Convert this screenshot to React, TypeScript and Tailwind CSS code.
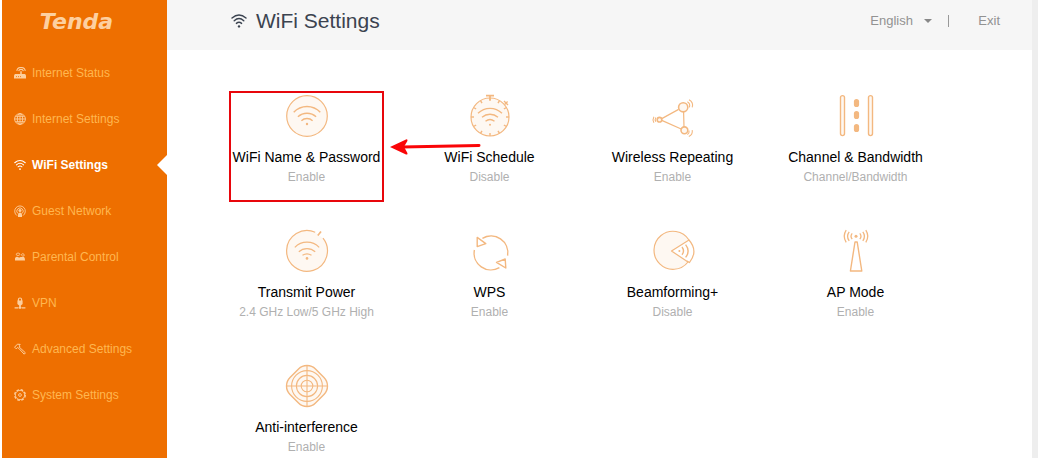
import React from "react";

interface iconProps {
  className?: string;
}

interface menuItem {
  label: string;
  icon: React.FC<iconProps>;
}

interface settingCard {
  title: string;
  status: string;
  icon: React.ReactNode;
  marked?: boolean;
}

const WifiIcon: React.FC<iconProps> = ({ className }) => (
  <svg viewBox="0 0 16 16" fill="none" stroke="currentColor" strokeWidth="1.4" strokeLinecap="round" className={className}>
    <path d="M1 5 Q8 -1.2 15 5" />
    <path d="M3.2 7.8 Q8 3.4 12.8 7.8" />
    <path d="M5.4 10.4 Q8 8.2 10.6 10.4" />
    <circle cx="8" cy="13.4" r="1.2" fill="currentColor" stroke="none" />
  </svg>
);

const RouterIcon: React.FC<iconProps> = ({ className }) => (
  <svg viewBox="0 0 12 12" fill="none" stroke="currentColor" strokeWidth="1.1" className={className}>
    <path d="M2.8 3.8 C3.6 -0.6 10.4 -0.6 11.3 3.8" />
    <path d="M4.7 4.2 C5.2 1.8 8.8 1.8 9.4 4.2" />
    <path d="M7 4.2 V7" strokeWidth="1.5" />
    <path d="M1 7 H11 L12 8.2 V11.4 H0 V8.2 Z" fill="currentColor" stroke="none" />
    <path d="M2 9.6 H3 M4 9.6 H5 M6 9.6 H7" stroke="#ee6f00" strokeWidth="0.8" />
  </svg>
);

const GlobeIcon: React.FC<iconProps> = ({ className }) => (
  <svg viewBox="0 0 12 12" fill="none" stroke="currentColor" strokeWidth="0.9" className={className}>
    <circle cx="6" cy="6" r="5.4" />
    <ellipse cx="6" cy="6" rx="2.7" ry="5.4" />
    <path d="M6 0.6 V11.4 M0.6 6 H11.4 M1.4 3.3 H10.6 M1.4 8.7 H10.6" />
  </svg>
);

const GuestIcon: React.FC<iconProps> = ({ className }) => (
  <svg viewBox="0 0 12 12" fill="none" stroke="currentColor" strokeWidth="0.9" className={className}>
    <path d="M3 10.6 A5.3 5.3 0 1 1 9 10.6" />
    <path d="M3.7 8.4 A3.2 3.2 0 1 1 8.3 8.4" />
    <circle cx="6" cy="5.4" r="1.5" fill="currentColor" stroke="none" />
    <path d="M4 12 V9.4 Q4 7.6 6 7.6 Q8 7.6 8 9.4 V12 Z" fill="currentColor" stroke="none" />
  </svg>
);

const FamilyIcon: React.FC<iconProps> = ({ className }) => (
  <svg viewBox="0 0 12 12" fill="none" stroke="currentColor" strokeWidth="0.8" className={className}>
    <path d="M2.2 4 Q2.2 2 4 2 Q6 2 6 4 M7.4 4.6 Q7.4 2.6 8.8 2.6 Q10.3 2.6 10.3 4.8" />
    <path d="M1 9.4 V7.2 Q2 5.4 4 6 Q5.4 7 6.4 6 H10 Q11 6.6 11 9.4 Z" fill="currentColor" stroke="none" />
    <path d="M2.6 4.4 H5.4 M8 5 H10" />
  </svg>
);

const VpnIcon: React.FC<iconProps> = ({ className }) => (
  <svg viewBox="0 0 12 12" fill="none" stroke="currentColor" className={className}>
    <path d="M4.4 4 V2.6 A1.6 1.6 0 0 1 7.6 2.6 V4" strokeWidth="1.1" />
    <path d="M3.4 3.6 H8.6 V7 L6 9.2 L3.4 7 Z" fill="currentColor" stroke="none" />
    <path d="M6 8 V10.4 M0.6 10.8 H4.4 M7.6 10.8 H11.4" strokeWidth="1.2" />
    <circle cx="6" cy="10.6" r="1.3" fill="currentColor" stroke="none" />
  </svg>
);

const HammerIcon: React.FC<iconProps> = ({ className }) => (
  <svg viewBox="0 0 12 12" fill="none" stroke="currentColor" strokeWidth="1" strokeLinejoin="round" className={className}>
    <path d="M0.6 4.2 L3.4 1.2 L6.2 1.4 L5.4 2.6 L5.8 4 L4.6 5.2 L3.4 4.6 L2.2 5.8 Z" />
    <path d="M5.6 4.4 L11.4 9.8 L10.2 11.2 L4.8 5.4" />
  </svg>
);

const GearIcon: React.FC<iconProps> = ({ className }) => (
  <svg viewBox="0 0 12 12" fill="none" stroke="currentColor" className={className}>
    <circle cx="6" cy="6" r="5.3" strokeWidth="1.3" strokeDasharray="2.6 1.56" />
    <circle cx="6" cy="6" r="4.6" strokeWidth="0.8" />
    <circle cx="6" cy="6" r="1.4" strokeWidth="0.9" />
  </svg>
);

const menu: menuItem[] = [
  { label: "Internet Status", icon: RouterIcon },
  { label: "Internet Settings", icon: GlobeIcon },
  { label: "WiFi Settings", icon: WifiIcon },
  { label: "Guest Network", icon: GuestIcon },
  { label: "Parental Control", icon: FamilyIcon },
  { label: "VPN", icon: VpnIcon },
  { label: "Advanced Settings", icon: HammerIcon },
  { label: "System Settings", icon: GearIcon },
];

const tint = "#fef8f2";

// hours marked on the stopwatch face
const ticks = [0, 30, 60, 90, 120, 150, 180, 210, 240, 270, 300, 330];

const cards: settingCard[] = [
  {
    title: "WiFi Name & Password",
    status: "Enable",
    marked: true,
    icon: (
      <>
        <circle cx="22" cy="22" r="20.3" fill={tint} strokeWidth="1.2" />
        <path d="M8.7 18.3 A18.2 18.2 0 0 1 35.3 18.3" />
        <path d="M12.9 22.8 A13.5 13.5 0 0 1 31.1 22.8" />
        <path d="M16.4 26.8 A8 8 0 0 1 27.6 26.8" />
        <circle cx="22" cy="30" r="1.2" fill="currentColor" stroke="none" />
      </>
    ),
  },
  {
    title: "WiFi Schedule",
    status: "Disable",
    icon: (
      <>
        <circle cx="22" cy="23" r="19" fill={tint} strokeWidth="1.2" />
        {ticks.map((angle) => (
          <path key={angle} d="M22 4 V7" transform={`rotate(${angle} 22 23)`} />
        ))}
        <path d="M18 1.6 H26 M22 2 V6" strokeWidth="1.8" />
        <path d="M36 7 L40 11 M36.6 10.4 L39.6 7.6" />
        <path d="M10 19.3 A17 17 0 0 1 34 19.3" />
        <path d="M14 23.2 A12.5 12.5 0 0 1 30 23.2" />
        <path d="M17.5 27.2 A7.6 7.6 0 0 1 26.5 27.2" />
        <circle cx="22" cy="30.8" r="1" fill="currentColor" stroke="none" />
      </>
    ),
  },
  {
    title: "Wireless Repeating",
    status: "Enable",
    icon: (
      <>
        <path d="M10.8 24.6 L27.6 15.4 M32.6 18 L33 33 M10.8 26.4 L30.2 35" strokeWidth="1.2" />
        <circle cx="32.2" cy="13.3" r="4.6" fill={tint} strokeWidth="1.6" />
        <circle cx="8.5" cy="25.7" r="2.3" fill={tint} strokeWidth="1.6" />
        <circle cx="33.4" cy="36.3" r="3.4" fill={tint} strokeWidth="1.6" />
        <g strokeWidth="1.1">
          <path d="M36.4 7.8 Q39.6 9.6 38.4 13.4 M38 5.8 Q42.8 8.4 41.2 13.4" />
          <path d="M38 36.6 Q38.6 39 36.4 40.6 M41.2 36.2 Q42 40.6 37.8 42.6" />
          <path d="M4.8 23.6 Q3.6 25.7 4.8 27.8 M2.9 22.7 Q1.2 25.7 2.9 28.7" />
        </g>
      </>
    ),
  },
  {
    title: "Channel & Bandwidth",
    status: "Channel/Bandwidth",
    icon: (
      <>
        <rect x="6.5" y="1.6" width="4" height="40" rx="2" fill={tint} />
        <rect x="34.5" y="1.6" width="4" height="40" rx="2" fill={tint} />
        <g fill="currentColor" stroke="none">
          <rect x="19.9" y="5" width="5.2" height="8" rx="2.6" />
          <rect x="19.9" y="17" width="5.2" height="8" rx="2.6" />
          <rect x="19.9" y="30" width="5.2" height="8" rx="2.6" />
        </g>
      </>
    ),
  },
  {
    title: "Transmit Power",
    status: "2.4 GHz Low/5 GHz High",
    icon: (
      <>
        <path d="M30.2 3.2 A20.4 20.4 0 1 0 38 9.2" fill={tint} strokeWidth="1.2" />
        <path d="M32.8 6.6 L36 2.4" strokeWidth="1.7" />
        <path d="M9.8 18.3 A17 17 0 0 1 34.2 18.3" strokeWidth="1.2" />
        <path d="M13.8 22.8 A12 12 0 0 1 30.2 22.8" strokeWidth="1.2" />
        <path d="M17.5 26.2 A8.4 8.4 0 0 1 26.5 26.2" strokeWidth="1.2" />
        <circle cx="22" cy="29.4" r="1.3" fill="currentColor" stroke="none" />
      </>
    ),
  },
  {
    title: "WPS",
    status: "Enable",
    icon: (
      <>
        <path d="M14.4 9.4 A16.8 16.8 0 0 1 39.6 26.6" />
        <path d="M6.4 21 A16.8 16.8 0 0 0 31.4 38.6" />
        <path d="M9.2 8.4 L17.8 14.6 L9.2 17.6 Z" />
        <path d="M28.5 33.3 L37.2 30 L37.8 39 Z" />
      </>
    ),
  },
  {
    title: "Beamforming+",
    status: "Disable",
    icon: (
      <>
        <path d="M38 11 A19 19 0 1 0 37 33 L20.5 22 Z" fill={tint} strokeWidth="1.2" />
        <path d="M38 11 Q47.6 22 38.4 33.6 L36 32" strokeWidth="1.2" />
        <circle cx="28.4" cy="22" r="1" fill="currentColor" stroke="none" />
        <path d="M31 18 Q34 22 31 25.8" />
        <path d="M34.6 15.6 Q39.6 22 34.6 28.4" />
      </>
    ),
  },
  {
    title: "AP Mode",
    status: "Enable",
    icon: (
      <>
        <circle cx="22" cy="7.3" r="1.5" fill="currentColor" stroke="none" />
        <g strokeWidth="1.3">
          <path d="M25.8 4.4 Q28.2 7.3 25.8 10.2 M28.8 2.8 Q32.2 7.3 28.8 11.8 M31.8 1.2 Q35.8 7.3 31.8 13.4" />
          <path d="M18.2 4.4 Q15.8 7.3 18.2 10.2 M15.2 2.8 Q11.8 7.3 15.2 11.8 M12.2 1.2 Q8.2 7.3 12.2 13.4" />
        </g>
        <path d="M21 13 H23.2 L27.8 42 H16.4 Z" />
      </>
    ),
  },
  {
    title: "Anti-interference",
    status: "Enable",
    icon: (
      <>
        <rect x="4" y="4" width="36" height="36" rx="12" fill={tint} transform="rotate(45 22 22)" />
        <circle cx="22" cy="22" r="15.4" strokeWidth="1.1" />
        <circle cx="22" cy="22" r="10.6" strokeWidth="1.1" />
        <circle cx="22" cy="22" r="5.8" strokeWidth="1.1" />
        <path d="M22 1.4 V42.6 M1.4 22 H42.6" strokeWidth="1.1" />
      </>
    ),
  },
];

const Sidebar: React.FC = () => (
  <aside className="w-[165px] shrink-0 bg-[#ee6f00]">
    <div className="flex h-[50px] items-center justify-center pr-4 pb-1.5">
      <span className="font-['DejaVu_Sans','Liberation_Sans',sans-serif] text-[22px] leading-6 font-bold italic text-[#fdd0a0]">
        Tenda
      </span>
    </div>
    <nav>
      {menu.map(({ label, icon: Icon }) => {
        const active = label === "WiFi Settings";
        return (
          <a
            key={label}
            href="#"
            aria-current={active ? "page" : undefined}
            className={
              active
                ? "relative flex h-[46px] items-center gap-1.5 pl-3 text-xs font-bold text-white"
                : "flex h-[46px] items-center gap-1.5 pl-3 text-xs text-[#ffb750]"
            }
          >
            <Icon className={active ? "size-3 text-white" : "size-3 text-[#fdcf9e]"} />
            {label}
            {active && (
              <svg viewBox="0 0 10 20" className="absolute right-0 h-5 w-[10px]">
                <path d="M10 0 L0 10 L10 20 Z" fill="#fff" />
              </svg>
            )}
          </a>
        );
      })}
    </nav>
  </aside>
);

const Header: React.FC = () => (
  <header className="flex h-[50px] items-center justify-between bg-[#f6f6f6] pr-8 pb-2 pl-16">
    <h1 className="flex items-center gap-[9px] text-[21px] leading-7 text-[#3b4350]">
      <WifiIcon className="size-4" />
      WiFi Settings
    </h1>
    <div className="flex items-center text-[13px] leading-5 text-[#929292]">
      <div className="relative flex items-center">
        <select aria-label="Language" className="w-[62px] appearance-none bg-transparent outline-none">
          <option>English</option>
        </select>
        <svg viewBox="0 0 8 4" className="pointer-events-none absolute right-0 h-1 w-2">
          <path d="M0 0 H8 L4 4 Z" fill="#888" />
        </svg>
      </div>
      <span className="mr-[29px] ml-4 h-3 w-px bg-[#999]" />
      <a href="#">Exit</a>
    </div>
  </header>
);

const Card: React.FC<settingCard> = ({ title, status, icon, marked }) => (
  <div className="relative">
    <button type="button" className="flex w-full flex-col items-center">
      <svg
        viewBox="0 0 44 44"
        fill="none"
        stroke="currentColor"
        strokeWidth="1.4"
        strokeLinejoin="round"
        className="mb-[9px] size-11 text-[#f3b880]"
      >
        {icon}
      </svg>
      <span className="text-sm leading-5 whitespace-nowrap text-black">{title}</span>
      <span className="text-xs leading-5 whitespace-nowrap text-[#b0b0b0]">{status}</span>
    </button>
    {marked && (
      <div className="pointer-events-none absolute -inset-x-px -top-[3px] z-10 mx-auto h-[111px] w-[155px] border-2 border-[#e8060c]">
        <svg viewBox="0 0 92 20" className="absolute top-[44px] left-[159px] h-5 w-[92px]">
          <path d="M12 10 L89 8.4" stroke="#fa0507" strokeWidth="3" strokeLinecap="round" />
          <path d="M0 10 L16 2.4 Q18 2 17.4 4 L14 9.8 L17.4 16 Q18 18 16 17.4 Z" fill="#fa0507" />
        </svg>
      </div>
    )}
  </div>
);

const App: React.FC = () => {
  return (
    <div className="flex min-h-screen bg-white pl-0.5 font-['Liberation_Sans',Arial,sans-serif]">
      <Sidebar />
      <div className="min-w-0 flex-1">
        <Header />
        <main className="grid grid-cols-4 gap-y-[42px] pt-11 pr-[85px] pl-12">
          {cards.map((card) => (
            <Card key={card.title} {...card} />
          ))}
        </main>
      </div>
      <div className="w-1.5 shrink-0 bg-[#eeeeee]" />
    </div>
  );
};

export default App;
